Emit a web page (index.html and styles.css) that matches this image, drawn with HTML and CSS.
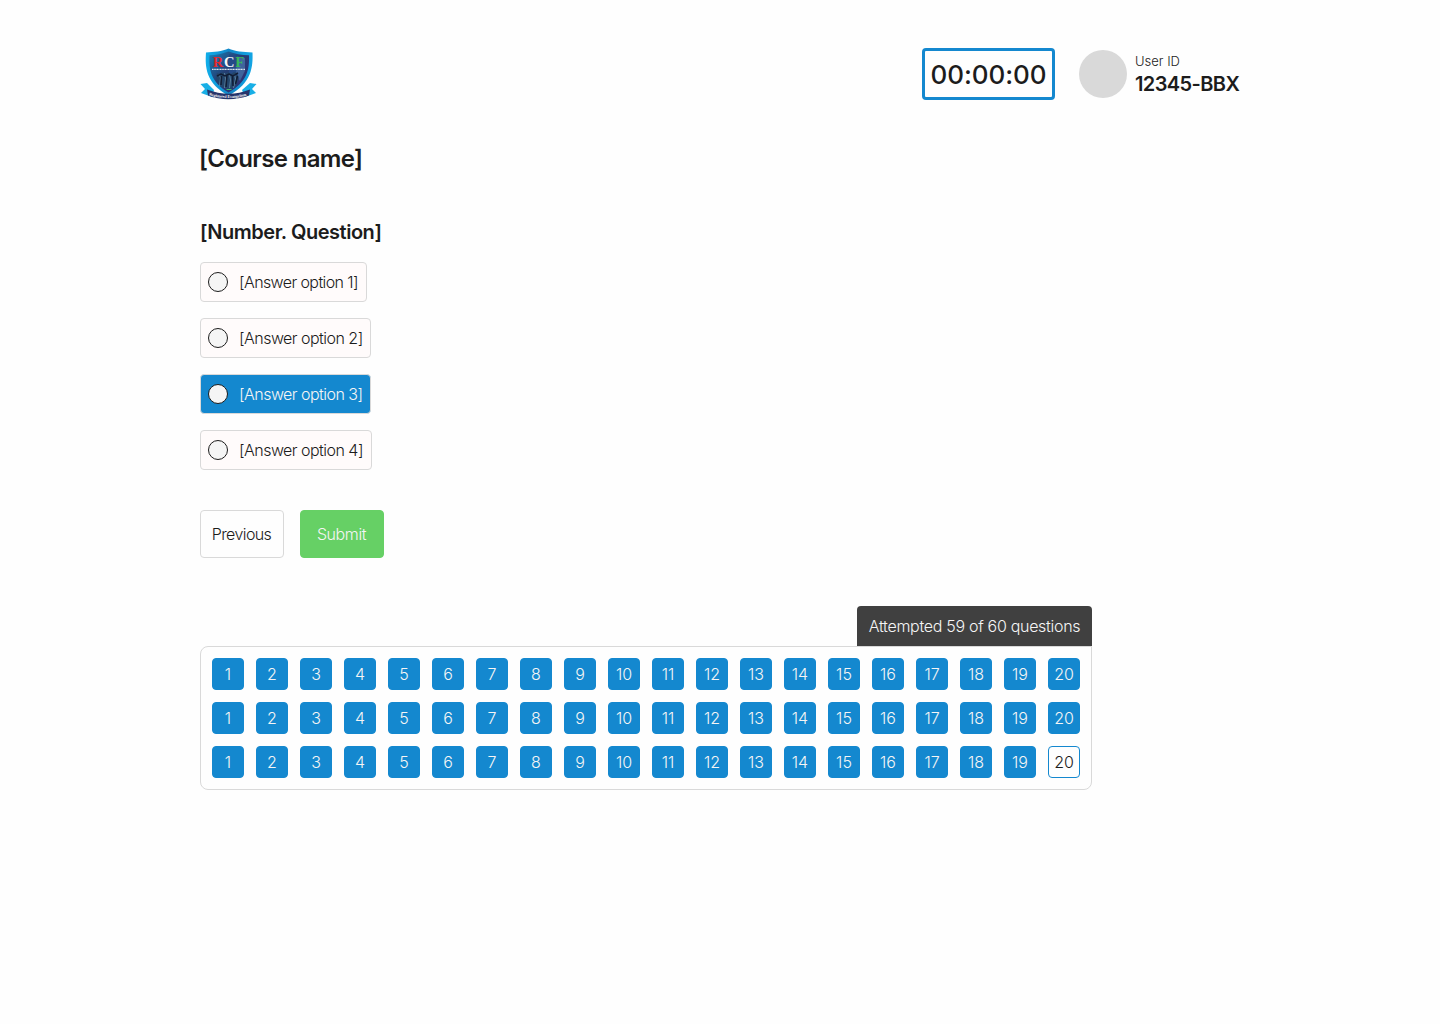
FILE: index.html
```html
<!DOCTYPE html>
<html lang="en">
<head>
<meta charset="utf-8">
<title>Course test</title>
<link rel="stylesheet" href="styles.css">
</head>
<body>
<main class="page">
  <header class="header">
    <svg class="logo" viewBox="0 0 56 52" role="img" aria-label="RCF">
      <defs>
        <linearGradient id="shield" x1="0" y1="0" x2="1" y2="0">
          <stop offset="0" stop-color="#10aeea"/><stop offset=".5" stop-color="#1287c8"/><stop offset="1" stop-color="#12a5e4"/>
        </linearGradient>
        <linearGradient id="field" x1="0" y1="0" x2="1" y2="1">
          <stop offset="0" stop-color="#1684bd"/><stop offset=".45" stop-color="#253e73"/><stop offset="1" stop-color="#322b75"/>
        </linearGradient>
      </defs>
      <path d="M.5 36 7 35 14 42 12 49 1 45 5 41ZM56.500 36 50 35 42 42 45 49 56 45 52 41Z" fill="#18afe6"/>
      <path d="M28.500.5C22 3.500 14 4 6 4.500c-1 14-.5 31 22.500 43C52 35.500 53 18.500 52.500 4.500 43 4 35 3.500 28.500.5Z" fill="url(#shield)"/>
      <path d="M28.500 3.500C22 6 16 7 9.500 7.300c-.7 14 1 26.700 19 37.200C47.500 34 49.500 21.300 49 7.300 41 7 35 6 28.500 3.500Z" fill="url(#field)"/>
      <path d="M29 6c6 2 10 3 16 3.400.4 9-1 15-3.500 20L29 31Z" fill="#244a87"/>
      <path d="M37 8.500 45 10v13l-5 10-4-5Z" fill="#5277aa" opacity=".6"/>
      <path d="m17 25 3 1 3-2 2 2 3-2 3 2 3-2 3 1 2 5-3 8-7 4-9-4-4-8Z" fill="#23466b"/>
      <path d="m19 26 1.500 4-1 8m5-13 1 6-1 9m5-14 1 6-1 8m5-14 1 5-2 9" fill="none" stroke="#7397b0" stroke-width=".7"/>
      <path d="m17 28 4-2 4 2 4-2 4 2 5-3M21.500 28l-.5 9m6-10-1 12m6.500-12 .5 11m4.500-10-2 8" fill="none" stroke="#111d35" stroke-width="1.500"/>
      <text x="12.800" y="18.700" class="logo-letters"><tspan fill="#e22931">R</tspan><tspan fill="#f5f7f8">C</tspan><tspan fill="#39b65a">F</tspan></text>
      <path d="M12 21.300h33" stroke="#dce7ed" stroke-width="1.200" stroke-dasharray="1.200 .4"/>
      <path d="M26.500 41.500h5" stroke="#4bb36d" stroke-width="1"/>
      <path d="M7 41.500q22 8.500 43 0l-1 6q-21 7.500-41 0Z" fill="#27346b"/>
      <path id="motto" d="M9 47.300q20 5.500 39 0" fill="none"/>
      <text class="logo-motto"><textPath href="#motto" textLength="38">Registered Evangelism</textPath></text>
    </svg>
    <div class="session">
      <div class="timer"><span class="timer-value">00:00:00</span></div>
      <div class="user">
        <div class="avatar"></div>
        <div class="user-text">
          <div class="user-label">User ID</div>
          <div class="user-id">12345-BBX</div>
        </div>
      </div>
    </div>
  </header>

  <h1 class="course">[Course name]</h1>
  <h2 class="question">[Number. Question]</h2>

  <div class="options">
    <div class="option option-1"><span class="radio"></span><span>[Answer option 1]</span></div>
    <div class="option option-2"><span class="radio"></span><span>[Answer option 2]</span></div>
    <div class="option option-3 selected"><span class="radio"></span><span>[Answer option 3]</span></div>
    <div class="option option-4"><span class="radio"></span><span>[Answer option 4]</span></div>
  </div>

  <div class="actions">
    <button class="button previous">Previous</button>
    <button class="button submit">Submit</button>
  </div>

  <section class="progress">
    <div class="attempted"><span>Attempted 59 of 60 questions</span></div>
    <div class="grid" id="grid"></div>
  </section>
</main>
<script src="script.js"></script>
</body>
</html>
```
FILE: styles.css
```css
* { box-sizing: border-box; }

body {
  margin: 0;
  background: #fefefe;
  color: #1c1c1c;
  font: 300 16px/24px Inter, "Liberation Sans", sans-serif;
}

.page { width: 1040px; margin: 0 auto; padding-top: 48px; }

.header { display: flex; justify-content: space-between; height: 52px; }
.logo { width: 56px; height: 52px; overflow: visible; }
.logo-letters { font: 700 14.500px "Liberation Serif", serif; letter-spacing: .8px; }
.logo-motto { font: 700 4px "Liberation Serif", serif; fill: #fff; }

.session { display: flex; gap: 24px; }
.timer {
  display: flex;
  align-items: center;
  justify-content: center;
  width: 133px;
  height: 52px;
  border: 3px solid #1488cf;
  border-radius: 4px;
}
.timer-value { padding-top: 1px; font-size: 26px; font-weight: 500; letter-spacing: -.05px; white-space: nowrap; }
.user { display: flex; align-items: center; gap: 8px; width: 161px; }
.avatar { flex: none; width: 48px; height: 48px; border-radius: 50%; background: #d9d9d9; }
.user-text { padding-top: 1px; white-space: nowrap; }
.user-label { font-size: 13px; line-height: 18px; }
.user-id { font-size: 20px; line-height: 28px; font-weight: 600; letter-spacing: -.6px; }

.course { margin: 43px 0 0; font-size: 24px; line-height: 32px; font-weight: 600; letter-spacing: -.65px; text-indent: -1px; }
.question { margin: 44px 0 0; font-size: 20px; line-height: 27px; font-weight: 600; letter-spacing: -.47px; }

.options { display: flex; flex-direction: column; gap: 16px; margin-top: 16px; }
.option {
  display: flex;
  align-items: center;
  gap: 11px;
  height: 40px;
  padding-left: 7px;
  border: 1px solid #d9d9d9;
  border-radius: 4px;
  background: #fffbfb;
  letter-spacing: -.53px;
  white-space: nowrap;
}
.option-1 { width: 167px; letter-spacing: -.6px; }
.option-2, .option-3 { width: 171px; }
.option-4 { width: 172px; }
.radio { width: 20px; height: 20px; border: 1px solid #1c1c1c; border-radius: 50%; background: #f5f5f5; }
.selected { background: #1488cf; color: #f5f5f5; }

.actions { display: flex; gap: 16px; margin-top: 40px; }
.button {
  width: 84px;
  height: 48px;
  padding: 0;
  border: 1px solid #d9d9d9;
  border-radius: 4px;
  background: #fefefe;
  color: #1c1c1c;
  font: inherit;
  letter-spacing: -.4px;
}
.previous { padding-right: 1px; letter-spacing: -.6px; }
.submit { padding-right: 1px; border-color: #66d065; background: #66d065; color: #f5f5f5; }

.progress { display: flex; flex-direction: column; width: 892px; margin-top: 48px; }
.attempted {
  display: flex;
  align-items: center;
  justify-content: center;
  align-self: flex-end;
  width: 235px;
  height: 40px;
  border-radius: 4px 4px 0 0;
  background: #404040;
  color: #f5f5f5;
  letter-spacing: -.3px;
  white-space: nowrap;
}
.grid {
  display: grid;
  grid-template-columns: repeat(20, 32px);
  gap: 12px;
  height: 144px;
  padding: 11px;
  border: 1px solid #d9d9d9;
  border-radius: 8px 0 8px 8px;
}
.cell {
  display: flex;
  align-items: center;
  justify-content: center;
  height: 32px;
  border: 1px solid #1488cf;
  border-radius: 4px;
  background: #1488cf;
  color: #f5f5f5;
}
.cell.open { background: #fefefe; color: #1c1c1c; }
```
FILE: script.js
```js
const grid = document.getElementById("grid");
for (let i = 0; i < 60; i++) {
  const cell = document.createElement("div");
  cell.className = i === 59 ? "cell open" : "cell";
  cell.textContent = (i % 20) + 1;
  grid.appendChild(cell);
}
```
